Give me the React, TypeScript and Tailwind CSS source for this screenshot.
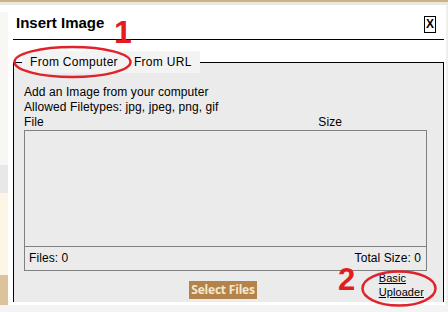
import React from 'react';

const Annotations = () => (
  <>
    <svg className="absolute inset-0 pointer-events-none" width={448} height={312} viewBox="0 0 448 312">
      <ellipse cx={72.5} cy={62} rx={58} ry={15} fill="none" stroke="#e0222a" strokeWidth={2.5} />
      <ellipse cx={399} cy={288.5} rx={36.5} ry={17} fill="none" stroke="#e0222a" strokeWidth={2.5} />
    </svg>
    <span className="absolute left-[114px] top-[16px] text-[32px] font-bold leading-none text-[#e31b23]">1</span>
    <span className="absolute left-[338px] top-[264px] text-[31px] font-bold leading-none text-[#e31b23]">2</span>
  </>
);

export default function App() {
  return (
    <div className="relative w-[448px] h-[312px] overflow-hidden bg-white flex flex-col text-black font-['Liberation_Sans',Arial,sans-serif]">
      <div className="h-[2px] bg-[#cdb383]" />
      <div className="h-[3px] bg-[#ebe8e2]" />

      <div className="flex h-[300px]">
        {/* page behind the dialog */}
        <div className="w-[8px] flex flex-col">
          <div className="h-[7px] bg-white" />
          <div className="h-[153px] bg-[#f9f7f3]" />
          <div className="h-[28px] bg-[#e8e8e8]" />
          <div className="h-[82px] bg-[#fdf5e6]" />
          <div className="flex-1 bg-[#dcc39a]" />
        </div>

        <div className="w-[438px] bg-white flex flex-col">
          <div className="flex justify-between pl-[8px] pr-[10px] h-[34px]">
            <div className="mt-[8px] text-[15px] font-bold leading-[20px]">Insert Image</div>
            <div className="mt-[11px] w-[12px] h-[17px] border border-black text-[12px] font-bold leading-[15px] text-center">X</div>
          </div>
          <div className="ml-[5px] mr-[2px] h-px bg-black" />

          <fieldset className="ml-[5px] mr-[2px] mt-[11px] min-w-0 border border-b-0 border-black bg-[#ebebeb]">
            <legend className="ml-[8px] flex bg-[#f3f3f3] text-[12px] leading-[22px] tracking-[0.3px]">
              <span className="px-[8px]">From Computer</span>
              <span className="px-[8px]">From URL</span>
            </legend>

            <div className="pl-[10px] pr-[16px] pt-[12px] pb-[3px] text-[12px] leading-[15px] tracking-[0.08px]">
              <div>Add an Image from your computer</div>
              <div>Allowed Filetypes: jpg, jpeg, png, gif</div>
              <div className="flex justify-between">
                <span>File</span>
                <span className="mr-[85px]">Size</span>
              </div>

              <div className="h-[141px] border border-[#808080] flex flex-col">
                <div className="flex-1" />
                <div className="h-[24px] border-t border-[#808080] flex items-center justify-between pl-[4px] pr-[5px]">
                  <span>Files: 0</span>
                  <span>Total Size: 0</span>
                </div>
              </div>

              <div className="flex items-start">
                <button className="ml-[165px] mt-[10px] w-[68px] h-[18px] bg-[#b3834b] text-[#f6e8cc] text-[12px] font-bold leading-[18px] text-center font-['Open_Sans',sans-serif] tracking-[-0.2px]">
                  Select Files
                </button>
                <a href="#" className="ml-auto mr-[3px] text-[11px] leading-[14px] underline text-black">
                  Basic
                  <br />
                  Uploader
                </a>
              </div>
            </div>
          </fieldset>
        </div>

        <div className="flex-1 bg-[#efefef]" />
      </div>

      <div className="flex-1 bg-[#f4f4f4]" />

      <Annotations />
    </div>
  );
}
